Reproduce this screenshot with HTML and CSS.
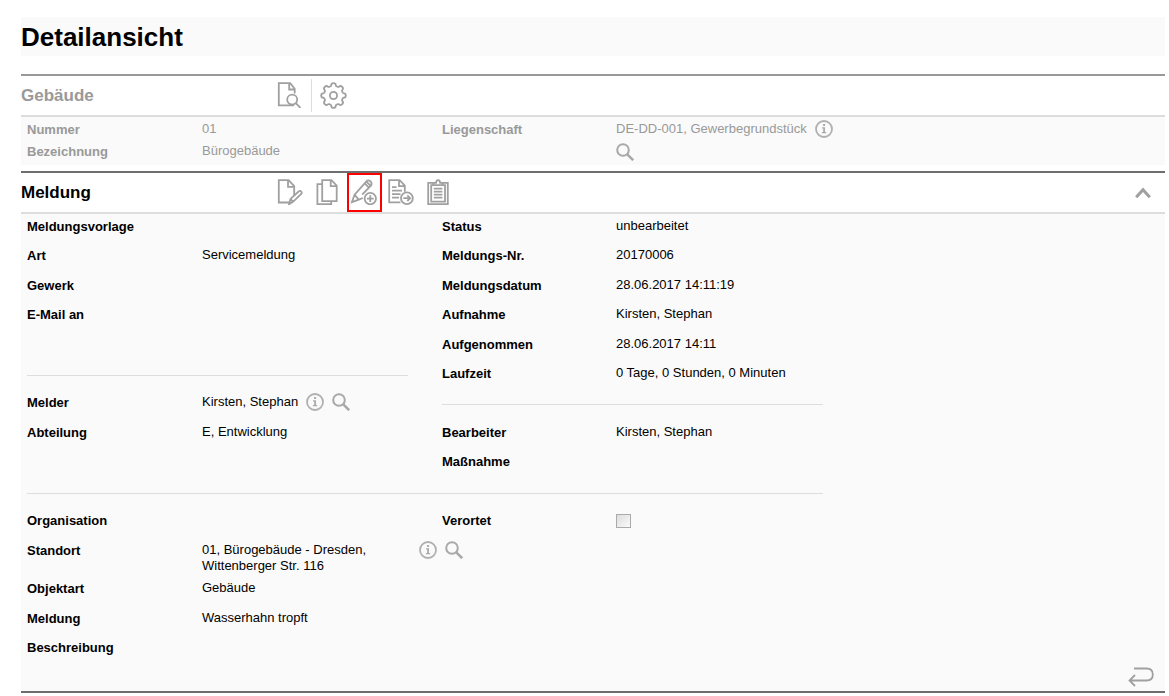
FILE: index.html
```html
<!DOCTYPE html>
<html lang="de">
<head>
<meta charset="utf-8">
<meta name="viewport" content="width=device-width, initial-scale=1">
<title>Detailansicht</title>
<link rel="stylesheet" href="styles.css">
</head>
<body>
<svg class="sprite" aria-hidden="true">
  <symbol id="info" viewBox="0 0 18 18">
    <circle cx="9" cy="9" r="8" fill="none" stroke="#b0b0b0" stroke-width="1.8"/>
    <path d="M8.1 4h2v1.9h-2zM7 7.3h3v4.8h1.2v1.1H6.9v-1.1h1.3V8.4H7z" fill="#aaa"/>
  </symbol>
  <symbol id="search" viewBox="0 0 18 18">
    <circle cx="7" cy="7" r="5.8" fill="none" stroke="#a8a8a8" stroke-width="2"/>
    <path d="M11.3 11.3l5.9 5.9" fill="none" stroke="#a8a8a8" stroke-width="2.5"/>
  </symbol>
</svg>
<main class="page">
  <h1 class="title">Detailansicht</h1>

  <section class="panel panel-muted">
    <header class="panel-head">
      <h2 class="panel-title">Gebäude</h2>
      <div class="tools">
        <button class="tool" type="button" aria-label="Gebäude anzeigen">
          <svg class="icon" viewBox="0 0 26 26"><path d="M17 23.3H1.8V1.2h11.4l4.5 5.6v4.7M12.2 1.2v6.3h5.4"/><circle cx="15.2" cy="17.6" r="5"/><path d="M18.8 21.2l4.7 4.7"/></svg>
        </button>
        <span class="divider"></span>
        <button class="tool" type="button" aria-label="Einstellungen">
          <svg class="icon icon-gear" viewBox="0 0 27 27"><circle cx="13.5" cy="13.5" r="3.6"/><path d="M10.6 4.3Q11.3 3.9 11.3 3.1Q11.3 1.2 13.5 1.2T15.7 3.1Q15.7 3.9 16.4 4.3L17.9 4.9Q18.7 5.1 19.2 4.6Q20.6 3.2 22.2 4.8T22.4 7.8Q21.9 8.3 22.1 9.1L22.7 10.6Q23.1 11.3 23.9 11.3Q25.8 11.3 25.8 13.5T23.9 15.7Q23.1 15.7 22.7 16.4L22.1 17.9Q21.9 18.7 22.4 19.2Q23.8 20.6 22.2 22.2T19.2 22.4Q18.7 21.9 17.9 22.1L16.4 22.7Q15.7 23.1 15.7 23.9Q15.7 25.8 13.5 25.8T11.3 23.9Q11.3 23.1 10.6 22.7L9.1 22.1Q8.3 21.9 7.8 22.4Q6.4 23.8 4.8 22.2T4.6 19.2Q5.1 18.7 4.9 17.9L4.3 16.4Q3.9 15.7 3.1 15.7Q1.2 15.7 1.2 13.5T3.1 11.3Q3.9 11.3 4.3 10.6L4.9 9.1Q5.1 8.3 4.6 7.8Q3.2 6.4 4.8 4.8T7.8 4.6Q8.3 5.1 9.1 4.9Z"/></svg>
        </button>
      </div>
    </header>
    <div class="fields fields-compact">
      <span class="label">Nummer</span><span class="value">01</span>
      <span class="label">Liegenschaft</span>
      <span class="value value-wide span-two">
        <span>DE-DD-001, Gewerbegrundstück</span>
        <button class="mini" type="button" aria-label="Info zur Liegenschaft"><svg><use href="#info"/></svg></button>
        <button class="mini" type="button" aria-label="Liegenschaft suchen"><svg><use href="#search"/></svg></button>
      </span>
      <span class="label">Bezeichnung</span><span class="value">Bürogebäude</span>
    </div>
  </section>

  <section class="panel">
    <header class="panel-head">
      <h2 class="panel-title">Meldung</h2>
      <div class="tools">
        <button class="tool" type="button" aria-label="Bearbeiten">
          <svg class="icon" viewBox="0 0 26 26"><path d="M13 23.5H1.8V1.2h9.8l5.6 6v9.5M11 1.2v6.6h6.2"/><path d="M12 25.2l1.5-5.3 8.4-7.6q1.3-.9 2.3.2t.2 2.2l-8.4 8.1zM13.5 19.9l2.5 2.9"/></svg>
        </button>
        <button class="tool" type="button" aria-label="Kopieren">
          <svg class="icon" viewBox="0 0 26 26"><path d="M8.2 1.2h9.2l5.3 5.3v15.6H8.2zM16.7 1.2v6h6M8.2 5.2H3.4v20h13.8v-3.1"/></svg>
        </button>
        <button class="tool tool-marked" type="button" aria-label="Neu anlegen">
          <svg class="icon" viewBox="0 0 26 26"><path d="M11.8 19l-4 1.7L.9 23.2l2.7-7.6L15.4 2.3q1.8-1.8 3.9 0t.8 4.1l-8.9 9.3M3.6 15.6l4.2 5.1M13.6 4.4l4.4 4.2M15.4 2.7l4.3 4.1"/><circle cx="19.3" cy="19.6" r="5.7"/><path d="M19.3 16.2v6.8M15.9 19.6h6.8"/></svg>
        </button>
        <button class="tool" type="button" aria-label="Weiterleiten">
          <svg class="icon" viewBox="0 0 26 26"><path d="M12.5 23.3H1.2V1.2h10.4l5.2 5.4v6.2M11 1.2v6h5.8M4 8.2h4.5M4 11.7h10M4 15.2h8.5M4 18.7h7"/><circle cx="18.9" cy="19.2" r="5.9"/><path d="M15.3 19.2h6.6M19.3 16.4l2.8 2.8-2.8 2.8"/></svg>
        </button>
        <button class="tool" type="button" aria-label="Protokoll">
          <svg class="icon" viewBox="0 0 26 26"><path d="M9 3.8H3.2v21.4h19.6V3.8h-5.8"/><path d="M8.5 6.2V3.8h2.6q.2-2.6 2-2.6t2 2.6h2.6v2.4zM8.5 6.2H6.2v16.4H20V6.2h-2.3M8.8 9.7h8.6M8.8 12.7h8.6M8.8 15.7h8.6M8.8 18.7h8.6"/></svg>
        </button>
      </div>
      <button class="collapse" type="button" aria-label="Einklappen">
        <svg class="chevron" viewBox="0 0 16 12"><path d="M1.2 10.3L8 2.7l6.8 7.6"/></svg>
      </button>
    </header>
    <div class="panel-body">
      <div class="fields fields-main">
        <span class="label">Meldungsvorlage</span><span class="value"></span>
        <span class="label">Status</span><span class="value">unbearbeitet</span>
        <span class="label">Art</span><span class="value">Servicemeldung</span>
        <span class="label">Meldungs-Nr.</span><span class="value">20170006</span>
        <span class="label">Gewerk</span><span class="value"></span>
        <span class="label">Meldungsdatum</span><span class="value">28.06.2017 14:11:19</span>
        <span class="label">E-Mail an</span><span class="value"></span>
        <span class="label">Aufnahme</span><span class="value">Kirsten, Stephan</span>
        <span class="label"></span><span class="value"></span>
        <span class="label">Aufgenommen</span><span class="value">28.06.2017 14:11</span>
        <hr class="rule rule-left">
        <span class="label">Laufzeit</span><span class="value">0 Tage, 0 Stunden, 0 Minuten</span>
        <span class="label">Melder</span>
        <span class="value">
          <span>Kirsten, Stephan</span>
          <button class="mini" type="button" aria-label="Info zum Melder"><svg><use href="#info"/></svg></button>
          <button class="mini" type="button" aria-label="Melder suchen"><svg><use href="#search"/></svg></button>
        </span>
        <hr class="rule rule-right">
        <span class="label">Abteilung</span><span class="value">E, Entwicklung</span>
        <span class="label">Bearbeiter</span><span class="value">Kirsten, Stephan</span>
        <span class="label"></span><span class="value"></span>
        <span class="label">Maßnahme</span><span class="value"></span>
        <hr class="rule rule-full">
      </div>
      <div class="fields fields-location">
        <span class="label">Organisation</span><span class="value"></span>
        <label class="label" for="verortet">Verortet</label>
        <span class="value"><input class="check" type="checkbox" id="verortet"></span>
        <span class="label">Standort</span>
        <span class="value span-rest">
          <span class="address">01, Bürogebäude - Dresden, Wittenberger Str. 116</span>
          <button class="mini" type="button" aria-label="Info zum Standort"><svg><use href="#info"/></svg></button>
          <button class="mini" type="button" aria-label="Standort suchen"><svg><use href="#search"/></svg></button>
        </span>
        <span class="label">Objektart</span><span class="value span-rest">Gebäude</span>
        <span class="label">Meldung</span><span class="value span-rest">Wasserhahn tropft</span>
        <span class="label">Beschreibung</span><span class="value span-rest"></span>
      </div>
      <footer class="panel-foot">
        <button class="back" type="button" aria-label="Zurück">
          <svg class="icon" viewBox="0 0 26 20"><path d="M6 1.5h12.5q6.3 0 6.3 6t-6.3 6H1.5M7 8l-5.5 5.5L7 19"/></svg>
        </button>
      </footer>
    </div>
  </section>
</main>
</body>
</html>
```
FILE: styles.css
```css
* {
  box-sizing: border-box;
}

body {
  margin: 0;
  background: #fff;
  color: #000;
  font: 13px/16px "Liberation Sans", Arial, sans-serif;
}

.sprite {
  display: none;
}

.page {
  padding: 17px 4px 0 21px;
}

.title {
  margin: 0 0 18px;
  padding: 5px 0 4px;
  background: #fafafa;
  font-size: 26px;
  line-height: 30px;
}

.panel {
  border-top: 2px solid #6e6e6e;
  border-bottom: 2px solid #6e6e6e;
}

.panel-muted {
  margin-bottom: 6px;
  border-top-color: #999;
  border-bottom: 0;
  color: #999;
}

.panel-head {
  display: flex;
  align-items: center;
  border-bottom: 2px solid #ddd;
}

.panel-title {
  width: 252px;
  margin: 0;
  font-size: 17px;
  line-height: 20px;
}

.tools {
  display: flex;
  align-items: center;
  gap: 2px;
}

button {
  display: flex;
  align-items: center;
  justify-content: center;
  padding: 0;
  border: 0;
  background: none;
  cursor: pointer;
}

.tool {
  width: 35px;
  height: 39px;
  padding: 0 1px 1px 0;
}

.tool-marked {
  border: 2px solid #f00;
}

.icon {
  flex: none;
  width: 26px;
  height: 26px;
  fill: none;
  stroke: #a0a0a0;
  stroke-width: 1.8;
}

.icon-gear {
  width: 27px;
  height: 27px;
}

.divider {
  width: 1px;
  height: 33px;
  margin: 0 2px 0 1px;
  background: #ddd;
}

.collapse {
  margin: 0 14px 0 auto;
}

.chevron {
  width: 16px;
  height: 12px;
  fill: none;
  stroke: #a0a0a0;
  stroke-width: 3;
}

.fields {
  display: grid;
  grid-template-columns: 175px 240px 174px 207px;
  padding-left: 6px;
}

.fields-compact {
  grid-template-rows: repeat(2, 22px);
  padding-bottom: 4px;
  background: #fafafa;
}

.panel-body {
  background: #fafafa;
}

.fields-main {
  grid-template-rows: repeat(10, 1fr);
  min-height: 294px;
}

.fields-location {
  grid-template-rows: 30px 38px 30px 29px 29px;
}

.label {
  padding-top: 5px;
  font-weight: bold;
}

.value {
  display: flex;
  align-items: flex-start;
  gap: 8px;
  padding-top: 4px;
}

.value-wide {
  flex-wrap: wrap;
  row-gap: 6px;
  margin-right: -20px;
}

.span-two {
  grid-row: span 2;
}

.span-rest {
  grid-column: span 3;
}

.address {
  width: 209px;
  padding-right: 40px;
}

.mini {
  width: 18px;
  height: 16px;
}

.mini svg {
  flex: none;
  width: 18px;
  height: 18px;
}

.rule {
  width: 100%;
  height: 1px;
  margin: 14px 0 0;
  border: 0;
  background: #ddd;
}

.rule-left {
  grid-column: 1 / 3;
  width: 381px;
}

.rule-right {
  grid-column: 3 / 5;
}

.rule-full {
  grid-column: 1 / 5;
}

.check {
  width: 15px;
  height: 14px;
  margin: 2px 0 0;
  border: 1px solid #aaa;
  background: linear-gradient(135deg, #ddd, #fafafa);
  appearance: none;
}

.check:checked {
  background: #777;
}

.panel-foot {
  display: flex;
  justify-content: flex-end;
  padding: 3px 11px 4px 0;
}

.back .icon {
  height: 20px;
}
```
